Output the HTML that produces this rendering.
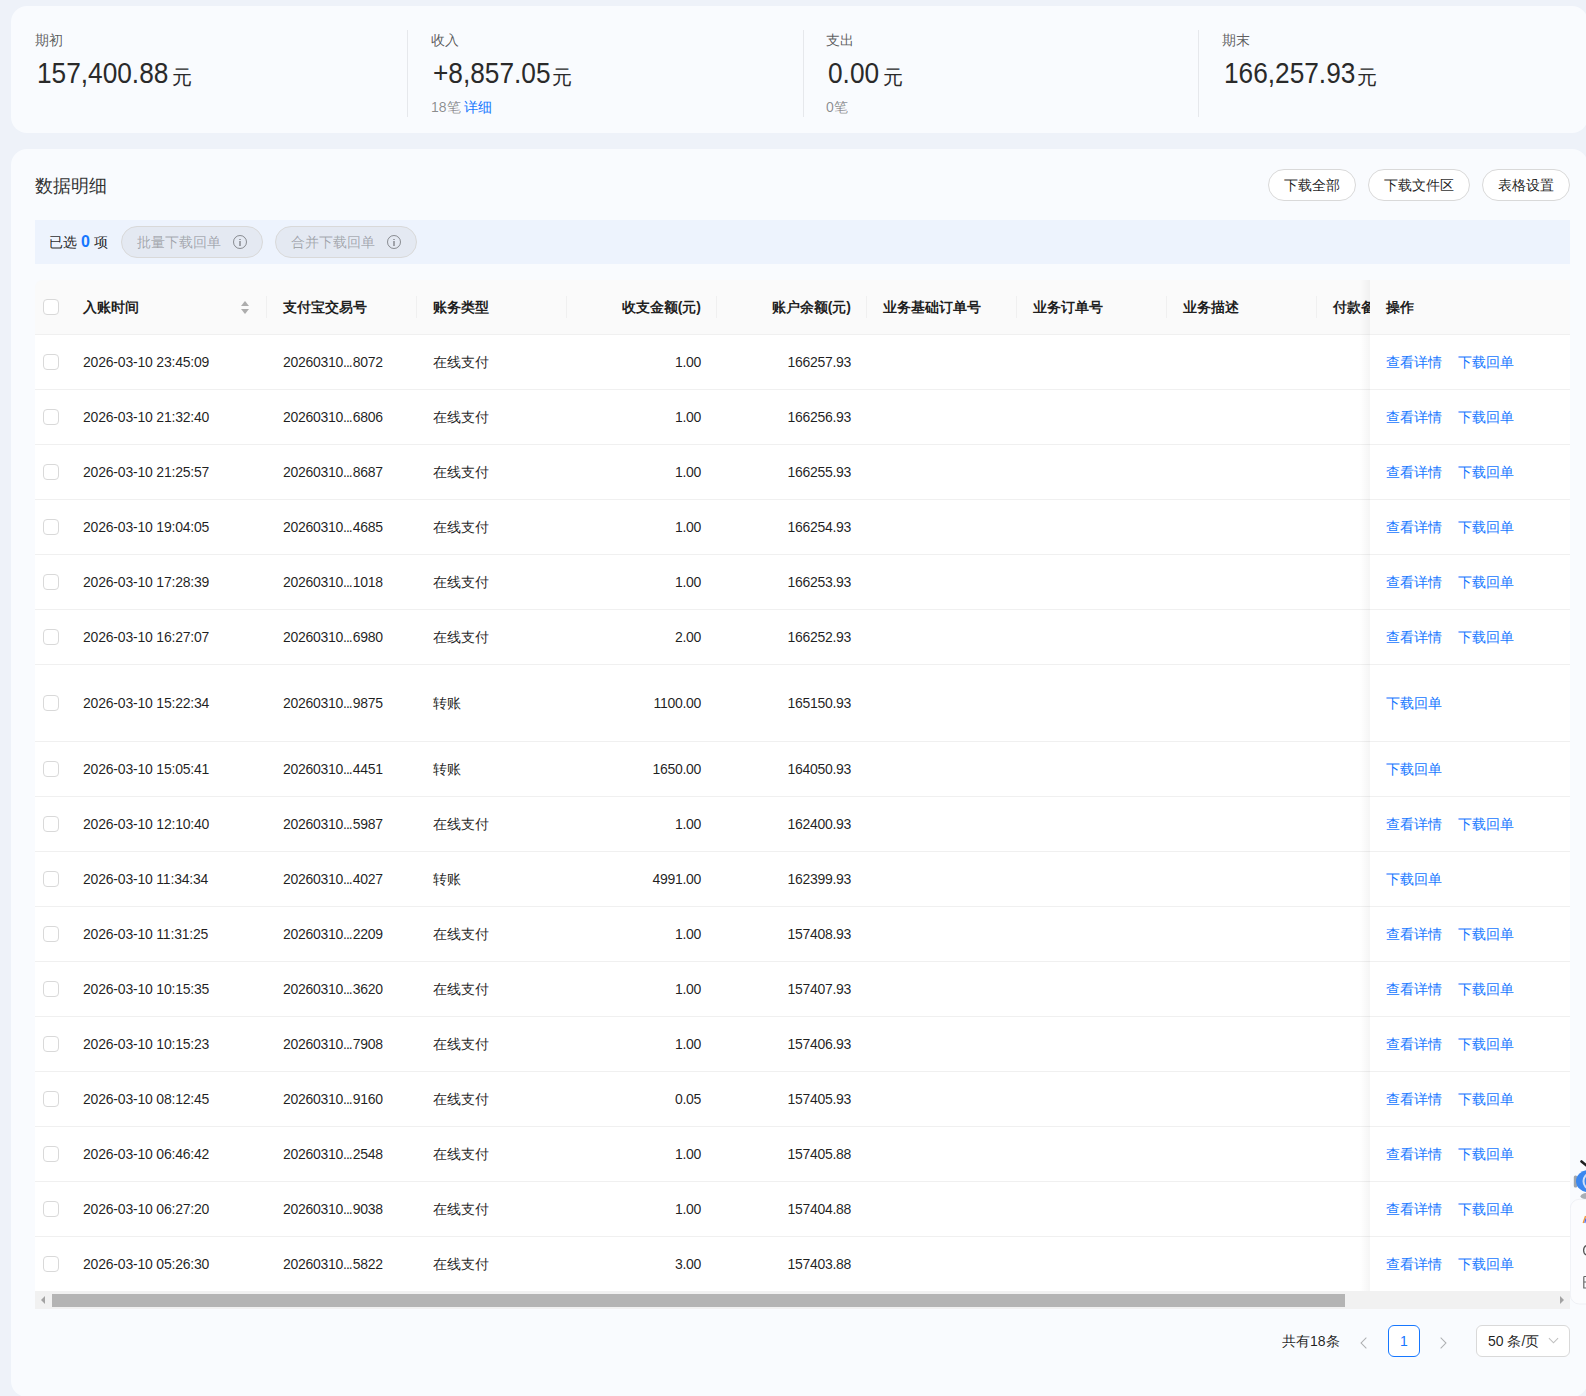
<!DOCTYPE html>
<html><head><meta charset="utf-8"><title>数据明细</title>
<style>
*{margin:0;padding:0;box-sizing:border-box}
html,body{width:1586px;height:1396px;overflow:hidden}
body{background:#eef2f9;font-family:"Liberation Sans",sans-serif;color:rgba(0,0,0,0.88);position:relative}
a{color:#1677ff;text-decoration:none}
.card1{position:absolute;left:11px;top:6px;width:1577px;height:127px;background:#f9fbfe;border-radius:16px}
.card2{position:absolute;left:11px;top:149px;width:1577px;height:1248px;background:#f9fbfe;border-radius:16px}
.stat{position:absolute;top:0}
.s1{left:24px}.s2{left:420px}.s3{left:815px}.s4{left:1211px}
.lbl{position:absolute;top:24px;left:0;font-size:14px;line-height:20px;color:rgba(0,0,0,0.65);white-space:nowrap}
.num{position:absolute;top:47px;left:0;font-size:29px;line-height:40px;white-space:nowrap;color:#2a2a2a}
.yuan{position:absolute;top:0;font-size:20px;line-height:48px}
.sub{position:absolute;top:91px;left:0;font-size:14px;line-height:20px;color:rgba(0,0,0,0.45);white-space:nowrap}
.blue{color:#1677ff}
.sep{position:absolute;top:24px;width:1px;height:87px;background:#e6e8ec}
.title{position:absolute;left:24px;top:25px;font-size:18px;line-height:24px;color:#333}
.btn{position:absolute;top:20px;height:32px;border:1px solid #d9d9d9;border-radius:16px;background:#fff;font-size:14px;line-height:30px;text-align:center;color:rgba(0,0,0,0.88)}
.filter{position:absolute;left:35px;top:220px;width:1535px;height:44px;background:#edf3fd}
.sel{position:absolute;left:14px;top:0;line-height:44px;font-size:14px;color:rgba(0,0,0,0.88)}
.sel b{color:#1677ff;font-weight:bold;font-size:16px}
.pill{position:absolute;top:6px;height:32px;border:1px solid #d9d9d9;border-radius:16px;background:#e4e9f2;font-size:14px;line-height:30px;color:rgba(0,0,0,0.3);padding-left:15px;width:142px;white-space:nowrap}
.info{position:absolute;left:111px;top:8px;width:14px;height:14px;border:1px solid rgba(0,0,0,0.4);border-radius:50%}
.info:before{content:"";position:absolute;left:5px;top:2.5px;width:2px;height:1.5px;background:rgba(0,0,0,0.3)}
.info:after{content:"";position:absolute;left:5px;top:5px;width:2px;height:5px;background:rgba(0,0,0,0.3)}
.table{position:absolute;left:35px;top:280px;width:1535px;height:55px}
.thead{position:absolute;left:0;top:0;width:1535px;height:55px;background:#fafafa;border-bottom:1px solid #f0f0f0;border-top-left-radius:8px}
.cb{position:absolute;left:8px;top:50%;margin-top:-8px;width:16px;height:16px;border:1px solid #d9d9d9;border-radius:4px;background:#fff}
.h{position:absolute;top:0;line-height:54px;font-size:14px;font-weight:bold;white-space:nowrap;color:rgba(0,0,0,0.88)}
.thead .cb{margin-top:-8.5px}
.t1{left:48px}.t2{left:248px}.t3{left:398px}.t6{left:848px}.t7{left:998px}.t8{left:1148px}.t9{left:1298px}
.r{text-align:right}
.t4{right:869px}.t5{right:719px}
.vs{position:absolute;top:16px;width:1px;height:22px;background:#f0f0f0}
.sorter{position:absolute;left:206px;top:20px;width:9px;height:15px}
.sorter:before{content:"";position:absolute;left:0;top:0.5px;border-left:4.5px solid transparent;border-right:4.5px solid transparent;border-bottom:5px solid #adadad}
.sorter:after{content:"";position:absolute;left:0;top:9px;border-left:4.5px solid transparent;border-right:4.5px solid transparent;border-top:5px solid #adadad}
.ophead{position:absolute;left:1335px;top:0;width:200px;height:55px;background:#fafafa;border-bottom:1px solid #f0f0f0}
.ophead .h{left:16px}
.tr{position:absolute;left:35px;width:1535px;background:#fff;box-shadow:0 1px 0 #f0f0f0}
.c{position:absolute;top:50%;transform:translateY(-50%);font-size:14px;line-height:22px;white-space:nowrap}
.op{position:absolute;left:1370px;width:200px;background:#fff;box-shadow:0 1px 0 #f0f0f0}
.op .lk{left:16px}
.lk a{margin-right:16px}
.opshadow{position:absolute;left:1360px;top:280px;width:10px;height:1011px;background:linear-gradient(to right,rgba(0,0,0,0),rgba(0,0,0,0.04))}
.scroll{position:absolute;left:35px;top:1291px;width:1535px;height:18px;background:#f1f1f1}
.thumb{position:absolute;left:17px;top:3px;width:1293px;height:13px;background:#b4b4b4}
.al{position:absolute;left:6px;top:5px;border-top:4px solid transparent;border-bottom:4px solid transparent;border-right:4px solid #a3a3a3}
.ar{position:absolute;right:6px;top:5px;border-top:4px solid transparent;border-bottom:4px solid transparent;border-left:4px solid #a3a3a3}
.pager{position:absolute;left:0;top:1325px;width:1586px;height:32px}
.total{position:absolute;left:1282px;top:0;line-height:32px;font-size:14px;color:rgba(0,0,0,0.88)}
.prev,.next{position:absolute;top:14px;width:8px;height:8px;border-left:1px solid rgba(0,0,0,0.3);border-bottom:1px solid rgba(0,0,0,0.3)}
.prev{left:1362px;transform:rotate(45deg)}
.next{left:1437px;transform:rotate(-135deg)}
.page{position:absolute;left:1388px;top:0;width:32px;height:32px;border:1px solid #1677ff;border-radius:6px;text-align:center;line-height:30px;font-size:14px;color:#1677ff;background:#fff}
.size{position:absolute;left:1476px;top:0;width:94px;height:32px;border:1px solid #d9d9d9;border-radius:6px;background:#fff;font-size:14px;line-height:30px;padding-left:11px;color:rgba(0,0,0,0.88)}
.chev{position:absolute;left:73px;top:9px;width:7px;height:7px;border-right:1px solid rgba(0,0,0,0.25);border-bottom:1px solid rgba(0,0,0,0.25);transform:rotate(45deg)}
.widget{position:absolute;left:1570px;top:1155px;width:16px;height:155px}
.bot{position:absolute;left:4px;top:5px;width:30px;height:40px;border-radius:50%;background:#3d8ef0}
.panel{position:absolute;left:0;top:45px;width:40px;height:103px;background:#fbfcfe;border-radius:8px;box-shadow:0 0 4px rgba(0,0,0,0.06)}

.n{letter-spacing:-0.3px}
.el{letter-spacing:-0.9px;margin-right:0.9px}
.c.t1{letter-spacing:-0.2px}
.num .d{display:inline-block;transform:scaleX(0.905);transform-origin:0 0;margin-left:1.5px}

</style></head><body>
<div class="card1">
  <div class="stat s1"><div class="lbl">期初</div><div class="num"><span class="d">157,400.88</span><span class="yuan" style="left:137px">元</span></div></div>
  <div class="sep" style="left:396px"></div>
  <div class="stat s2"><div class="lbl">收入</div><div class="num"><span class="d">+8,857.05</span><span class="yuan" style="left:120.5px">元</span></div><div class="sub">18笔 <span class="blue">详细</span></div></div>
  <div class="sep" style="left:792px"></div>
  <div class="stat s3"><div class="lbl">支出</div><div class="num"><span class="d">0.00</span><span class="yuan" style="left:56.5px">元</span></div><div class="sub">0笔</div></div>
  <div class="sep" style="left:1187px"></div>
  <div class="stat s4"><div class="lbl">期末</div><div class="num"><span class="d">166,257.93</span><span class="yuan" style="left:135px">元</span></div></div>
</div>
<div class="card2">
  <div class="title">数据明细</div>
  <div class="btn" style="left:1257px;width:88px">下载全部</div>
  <div class="btn" style="left:1357px;width:102px">下载文件区</div>
  <div class="btn" style="left:1471px;width:88px">表格设置</div>
</div>
<div class="filter">
  <span class="sel">已选 <b>0</b> 项</span>
  <span class="pill" style="left:86px">批量下载回单<i class="info"></i></span>
  <span class="pill" style="left:240px">合并下载回单<i class="info"></i></span>
</div>
<div class="table">
  <div class="thead">
    <span class="cb"></span>
    <span class="h t1">入账时间</span><span class="sorter"></span>
    <span class="vs" style="left:231px"></span>
    <span class="h t2">支付宝交易号</span>
    <span class="vs" style="left:381px"></span>
    <span class="h t3">账务类型</span>
    <span class="vs" style="left:531px"></span>
    <span class="h r t4">收支金额(元)</span>
    <span class="vs" style="left:681px"></span>
    <span class="h r t5">账户余额(元)</span>
    <span class="vs" style="left:831px"></span>
    <span class="h t6">业务基础订单号</span>
    <span class="vs" style="left:981px"></span>
    <span class="h t7">业务订单号</span>
    <span class="vs" style="left:1131px"></span>
    <span class="h t8">业务描述</span>
    <span class="vs" style="left:1281px"></span>
    <span class="h t9">付款备注</span>
  </div>
  <div class="ophead"><span class="h">操作</span></div>
</div>
<div class="tr" style="top:335px;height:54px"><span class="cb"></span><span class="c n t1">2026-03-10 23:45:09</span><span class="c n t2">20260310<span class=el>...</span>8072</span><span class="c t3">在线支付</span><span class="c n r t4">1.00</span><span class="c n r t5">166257.93</span></div><div class="op" style="top:335px;height:54px"><span class="c lk"><a>查看详情</a><a>下载回单</a></span></div><div class="tr" style="top:390px;height:54px"><span class="cb"></span><span class="c n t1">2026-03-10 21:32:40</span><span class="c n t2">20260310<span class=el>...</span>6806</span><span class="c t3">在线支付</span><span class="c n r t4">1.00</span><span class="c n r t5">166256.93</span></div><div class="op" style="top:390px;height:54px"><span class="c lk"><a>查看详情</a><a>下载回单</a></span></div><div class="tr" style="top:445px;height:54px"><span class="cb"></span><span class="c n t1">2026-03-10 21:25:57</span><span class="c n t2">20260310<span class=el>...</span>8687</span><span class="c t3">在线支付</span><span class="c n r t4">1.00</span><span class="c n r t5">166255.93</span></div><div class="op" style="top:445px;height:54px"><span class="c lk"><a>查看详情</a><a>下载回单</a></span></div><div class="tr" style="top:500px;height:54px"><span class="cb"></span><span class="c n t1">2026-03-10 19:04:05</span><span class="c n t2">20260310<span class=el>...</span>4685</span><span class="c t3">在线支付</span><span class="c n r t4">1.00</span><span class="c n r t5">166254.93</span></div><div class="op" style="top:500px;height:54px"><span class="c lk"><a>查看详情</a><a>下载回单</a></span></div><div class="tr" style="top:555px;height:54px"><span class="cb"></span><span class="c n t1">2026-03-10 17:28:39</span><span class="c n t2">20260310<span class=el>...</span>1018</span><span class="c t3">在线支付</span><span class="c n r t4">1.00</span><span class="c n r t5">166253.93</span></div><div class="op" style="top:555px;height:54px"><span class="c lk"><a>查看详情</a><a>下载回单</a></span></div><div class="tr" style="top:610px;height:54px"><span class="cb"></span><span class="c n t1">2026-03-10 16:27:07</span><span class="c n t2">20260310<span class=el>...</span>6980</span><span class="c t3">在线支付</span><span class="c n r t4">2.00</span><span class="c n r t5">166252.93</span></div><div class="op" style="top:610px;height:54px"><span class="c lk"><a>查看详情</a><a>下载回单</a></span></div><div class="tr" style="top:665px;height:76px"><span class="cb"></span><span class="c n t1">2026-03-10 15:22:34</span><span class="c n t2">20260310<span class=el>...</span>9875</span><span class="c t3">转账</span><span class="c n r t4">1100.00</span><span class="c n r t5">165150.93</span></div><div class="op" style="top:665px;height:76px"><span class="c lk"><a>下载回单</a></span></div><div class="tr" style="top:742px;height:54px"><span class="cb"></span><span class="c n t1">2026-03-10 15:05:41</span><span class="c n t2">20260310<span class=el>...</span>4451</span><span class="c t3">转账</span><span class="c n r t4">1650.00</span><span class="c n r t5">164050.93</span></div><div class="op" style="top:742px;height:54px"><span class="c lk"><a>下载回单</a></span></div><div class="tr" style="top:797px;height:54px"><span class="cb"></span><span class="c n t1">2026-03-10 12:10:40</span><span class="c n t2">20260310<span class=el>...</span>5987</span><span class="c t3">在线支付</span><span class="c n r t4">1.00</span><span class="c n r t5">162400.93</span></div><div class="op" style="top:797px;height:54px"><span class="c lk"><a>查看详情</a><a>下载回单</a></span></div><div class="tr" style="top:852px;height:54px"><span class="cb"></span><span class="c n t1">2026-03-10 11:34:34</span><span class="c n t2">20260310<span class=el>...</span>4027</span><span class="c t3">转账</span><span class="c n r t4">4991.00</span><span class="c n r t5">162399.93</span></div><div class="op" style="top:852px;height:54px"><span class="c lk"><a>下载回单</a></span></div><div class="tr" style="top:907px;height:54px"><span class="cb"></span><span class="c n t1">2026-03-10 11:31:25</span><span class="c n t2">20260310<span class=el>...</span>2209</span><span class="c t3">在线支付</span><span class="c n r t4">1.00</span><span class="c n r t5">157408.93</span></div><div class="op" style="top:907px;height:54px"><span class="c lk"><a>查看详情</a><a>下载回单</a></span></div><div class="tr" style="top:962px;height:54px"><span class="cb"></span><span class="c n t1">2026-03-10 10:15:35</span><span class="c n t2">20260310<span class=el>...</span>3620</span><span class="c t3">在线支付</span><span class="c n r t4">1.00</span><span class="c n r t5">157407.93</span></div><div class="op" style="top:962px;height:54px"><span class="c lk"><a>查看详情</a><a>下载回单</a></span></div><div class="tr" style="top:1017px;height:54px"><span class="cb"></span><span class="c n t1">2026-03-10 10:15:23</span><span class="c n t2">20260310<span class=el>...</span>7908</span><span class="c t3">在线支付</span><span class="c n r t4">1.00</span><span class="c n r t5">157406.93</span></div><div class="op" style="top:1017px;height:54px"><span class="c lk"><a>查看详情</a><a>下载回单</a></span></div><div class="tr" style="top:1072px;height:54px"><span class="cb"></span><span class="c n t1">2026-03-10 08:12:45</span><span class="c n t2">20260310<span class=el>...</span>9160</span><span class="c t3">在线支付</span><span class="c n r t4">0.05</span><span class="c n r t5">157405.93</span></div><div class="op" style="top:1072px;height:54px"><span class="c lk"><a>查看详情</a><a>下载回单</a></span></div><div class="tr" style="top:1127px;height:54px"><span class="cb"></span><span class="c n t1">2026-03-10 06:46:42</span><span class="c n t2">20260310<span class=el>...</span>2548</span><span class="c t3">在线支付</span><span class="c n r t4">1.00</span><span class="c n r t5">157405.88</span></div><div class="op" style="top:1127px;height:54px"><span class="c lk"><a>查看详情</a><a>下载回单</a></span></div><div class="tr" style="top:1182px;height:54px"><span class="cb"></span><span class="c n t1">2026-03-10 06:27:20</span><span class="c n t2">20260310<span class=el>...</span>9038</span><span class="c t3">在线支付</span><span class="c n r t4">1.00</span><span class="c n r t5">157404.88</span></div><div class="op" style="top:1182px;height:54px"><span class="c lk"><a>查看详情</a><a>下载回单</a></span></div><div class="tr" style="top:1237px;height:54px"><span class="cb"></span><span class="c n t1">2026-03-10 05:26:30</span><span class="c n t2">20260310<span class=el>...</span>5822</span><span class="c t3">在线支付</span><span class="c n r t4">3.00</span><span class="c n r t5">157403.88</span></div><div class="op" style="top:1237px;height:54px"><span class="c lk"><a>查看详情</a><a>下载回单</a></span></div>
<div class="opshadow"></div>
<div class="scroll"><i class="al"></i><div class="thumb"></div><i class="ar"></i></div>
<div class="pager">
  <span class="total">共有18条</span>
  <span class="prev"></span>
  <span class="page">1</span>
  <span class="next"></span>
  <span class="size">50 条/页<i class="chev"></i></span>
</div>
<svg class="widget" width="16" height="155" viewBox="0 0 16 155">
<line x1="11.5" y1="6.5" x2="16.5" y2="10.5" stroke="#1f1f1f" stroke-width="2.6" stroke-linecap="round"/>
<rect x="3.8" y="20.5" width="3.5" height="12" rx="1.5" fill="#9ea5ad"/>
<ellipse cx="19" cy="26.2" rx="13" ry="11.2" fill="#3b87ef"/>
<ellipse cx="20" cy="26.2" rx="6.5" ry="7.5" fill="none" stroke="#cfe0f9" stroke-width="2"/>
<ellipse cx="17.5" cy="41.2" rx="7" ry="3.2" fill="#a9aeb4"/>
<rect x="0.3" y="44.3" width="30" height="104.7" rx="9" fill="#fbfcfe" stroke="#eceef3" stroke-width="0.8"/>
<path d="M13.2 68 L15.6 61" stroke="#f29a3a" stroke-width="1.4"/><path d="M14.8 68 L16 63.5" stroke="#4a6cf0" stroke-width="1.2"/>
<path d="M16.5 90.5 A4.2 5 0 0 0 16.5 100" fill="none" stroke="#555" stroke-width="1.3"/>
<path d="M13.8 121.5 L13.8 133 L16 133 M13.8 127 L16 127 M13.8 121.5 L16 121.5" fill="none" stroke="#666" stroke-width="1.2"/>
</svg>
</body></html>
